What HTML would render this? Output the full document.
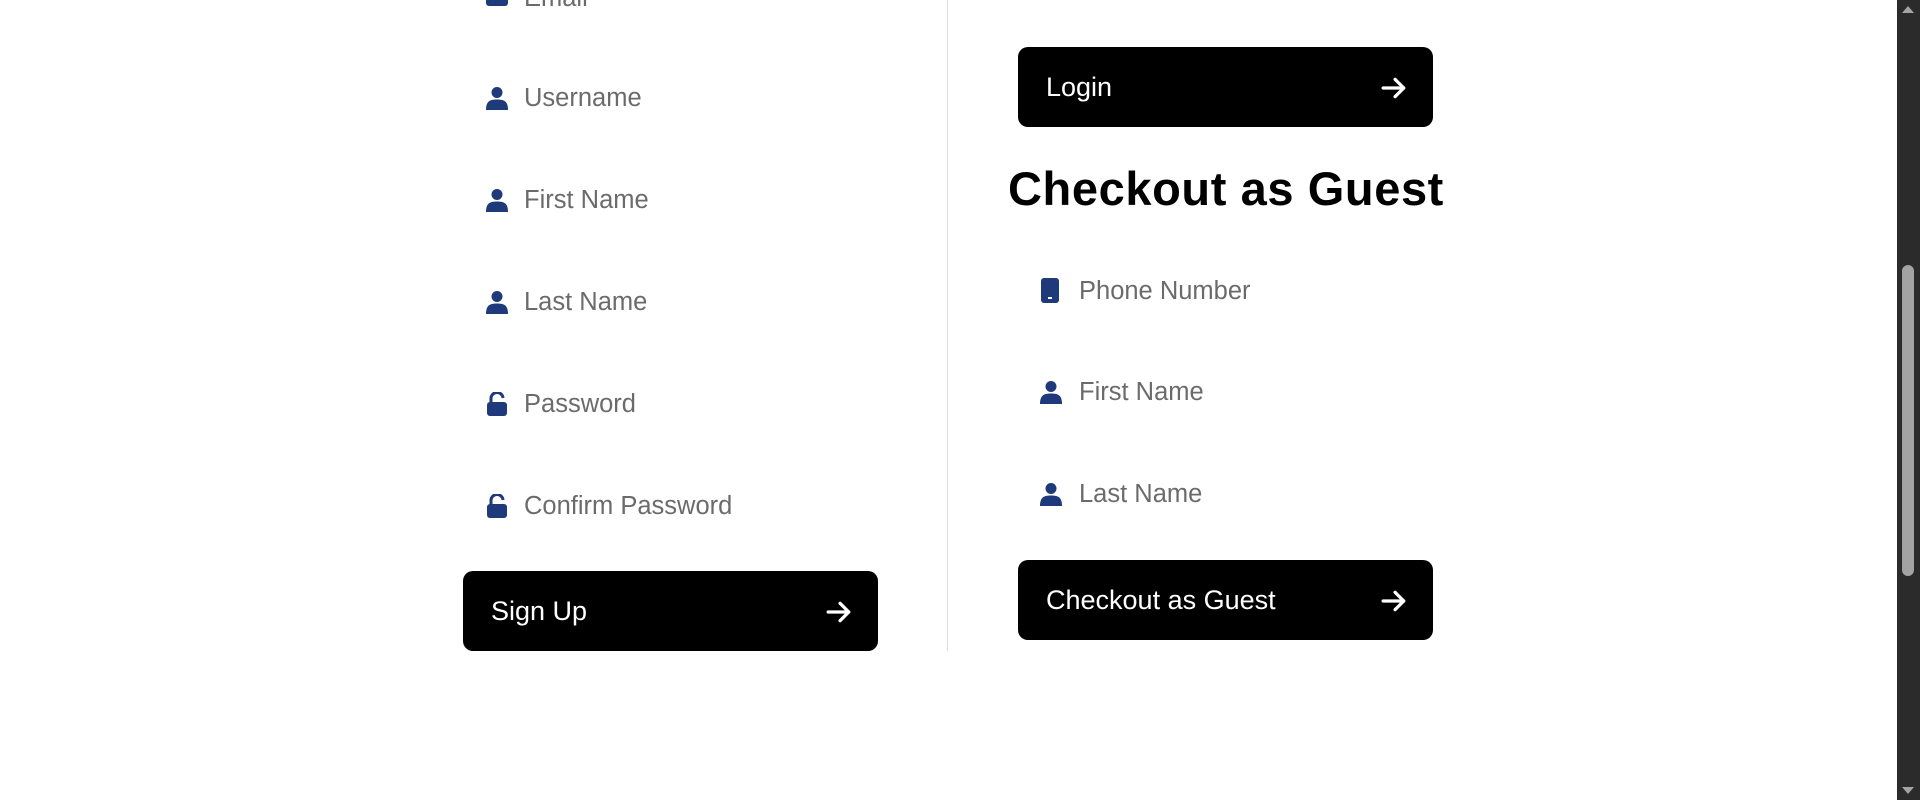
<!DOCTYPE html>
<html><head><style>
html,body{margin:0;padding:0;width:1920px;height:800px;overflow:hidden;background:#fff;font-family:"Liberation Sans",sans-serif;}
.f{position:absolute;font-size:25.5px;color:#6b6b6b;line-height:30px;height:30px;}
.ic{position:absolute;}
.btn{position:absolute;width:415px;height:80px;background:#000;border-radius:10px;color:#fff;font-size:27px;line-height:80px;box-sizing:border-box;padding-left:28px;}
.btn svg{position:absolute;right:26px;top:28px;}
.div{position:absolute;left:947px;top:0;width:1px;height:651px;background:#ddd;}
h1{position:absolute;margin:0;left:1008px;top:161px;font-size:47px;font-weight:bold;color:#000;white-space:nowrap;letter-spacing:0.6px;}
.sb{position:absolute;left:1897px;top:0;width:23px;height:800px;background:#2b2b2b;}
.th{position:absolute;left:1902px;top:265px;width:12px;height:311px;background:#a3a3a3;border-radius:6px;}
</style></head><body>
<svg width="0" height="0" style="position:absolute"><defs>
<symbol id="u" viewBox="0 0 22 24"><circle cx="11" cy="6.5" r="5.5" fill="#1e3a7a"/><path d="M0 24 C0 15 4 13.5 11 13.5 C18 13.5 22 15 22 24Z" fill="#1e3a7a"/></symbol>
<symbol id="l" viewBox="0 0 22 24"><path d="M5 11 V7 a6 6 0 0 1 12 -1" fill="none" stroke="#1e3a7a" stroke-width="3"/><rect x="1" y="10" width="20" height="14" rx="3" fill="#1e3a7a"/></symbol>
<symbol id="a" viewBox="0 0 24 24"><path d="M2 12 H21 M13 4 L21 12 L13 20" fill="none" stroke="#fff" stroke-width="3" stroke-linecap="round" stroke-linejoin="round"/></symbol>
</defs></svg>

<svg class="ic" style="left:486px;top:-14px" width="22" height="20"><rect x="0" y="0" width="22" height="20" rx="3" fill="#1e3a7a"/></svg>
<div class="f" style="left:524px;top:-17px">Email</div>

<svg class="ic" style="left:486px;top:86px" width="22" height="24"><use href="#u"/></svg>
<div class="f" style="left:524px;top:83px">Username</div>
<svg class="ic" style="left:486px;top:188px" width="22" height="24"><use href="#u"/></svg>
<div class="f" style="left:524px;top:185px">First Name</div>
<svg class="ic" style="left:486px;top:290px" width="22" height="24"><use href="#u"/></svg>
<div class="f" style="left:524px;top:287px">Last Name</div>
<svg class="ic" style="left:486px;top:392px" width="22" height="24"><use href="#l"/></svg>
<div class="f" style="left:524px;top:389px">Password</div>
<svg class="ic" style="left:486px;top:494px" width="22" height="24"><use href="#l"/></svg>
<div class="f" style="left:524px;top:491px">Confirm Password</div>

<div class="btn" style="left:463px;top:571px">Sign Up<svg width="26" height="26"><use href="#a"/></svg></div>

<div class="div"></div>

<div class="btn" style="left:1018px;top:47px">Login<svg width="26" height="26"><use href="#a"/></svg></div>
<h1>Checkout as Guest</h1>

<svg class="ic" style="left:1041px;top:278px" width="18" height="25"><rect x="0" y="0" width="18" height="25" rx="3" fill="#1e3a7a"/><rect x="7" y="19" width="4" height="2" fill="#fff"/></svg>
<div class="f" style="left:1079px;top:276px">Phone Number</div>
<svg class="ic" style="left:1040px;top:380px" width="22" height="24"><use href="#u"/></svg>
<div class="f" style="left:1079px;top:377px">First Name</div>
<svg class="ic" style="left:1040px;top:482px" width="22" height="24"><use href="#u"/></svg>
<div class="f" style="left:1079px;top:479px">Last Name</div>

<div class="btn" style="left:1018px;top:560px">Checkout as Guest<svg width="26" height="26"><use href="#a"/></svg></div>

<div class="sb"></div><div class="th"></div>
<svg style="position:absolute;left:1901px;top:4px" width="14" height="10"><path d="M1 9 L7 2 L13 9Z" fill="#a3a3a3"/></svg>
<svg style="position:absolute;left:1901px;top:786px" width="14" height="10"><path d="M1 1 L7 8 L13 1Z" fill="#a3a3a3"/></svg>
</body></html>
